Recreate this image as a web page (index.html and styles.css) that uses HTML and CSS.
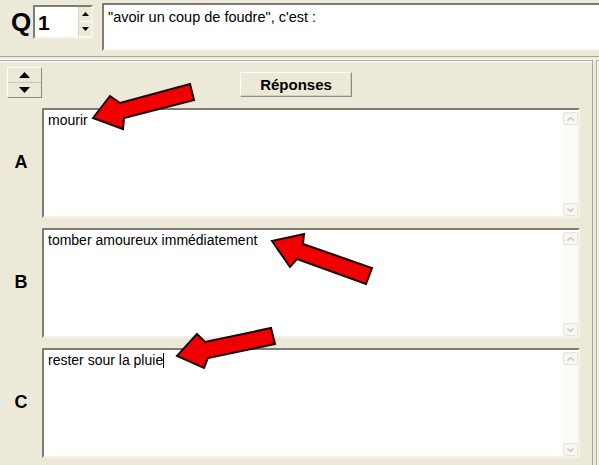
FILE: index.html
```html
<!DOCTYPE html>
<html lang="fr">
<head>
<meta charset="utf-8">
<title>Question</title>
<link rel="stylesheet" href="styles.css">
</head>
<body>
<div class="app">
  <div class="top">
    <div class="qlabel">Q</div>
    <div class="num">
      <div class="numfield">1</div>
      <div class="spinner">
        <div class="sbtn"><svg width="7" height="4" viewBox="0 0 7 4"><polygon points="3.5,0 7,4 0,4" fill="#000"/></svg></div>
        <div class="sbtn"><svg width="7" height="4" viewBox="0 0 7 4"><polygon points="0,0 7,0 3.5,4" fill="#000"/></svg></div>
      </div>
    </div>
    <div class="question">"avoir un coup de foudre", c'est :</div>
  </div>
  <div class="sep"></div>
  <div class="main">
    <div class="panel">
      <div class="head">
        <div class="updown">
          <div class="ud"><svg width="11" height="6" viewBox="0 0 11 6"><polygon points="5.5,0 11,6 0,6" fill="#000"/></svg></div>
          <div class="ud ud-low"><svg width="11" height="6" viewBox="0 0 11 6"><polygon points="0,0 11,0 5.5,6" fill="#000"/></svg></div>
        </div>
        <div class="repbtn">Réponses</div>
        <div></div>
      </div>
      <div class="row">
        <div class="letter">A</div>
        <div class="tbox">
          <div class="txt">mourir</div>
          <div class="vscroll">
            <div class="sarr"><svg width="7" height="4" viewBox="0 0 7 4"><polyline points="0.5,3.5 3.5,0.5 6.5,3.5" fill="none" stroke="#c4c2b6" stroke-width="1.2"/></svg></div>
            <div class="sarr"><svg width="7" height="4" viewBox="0 0 7 4"><polyline points="0.5,0.5 3.5,3.5 6.5,0.5" fill="none" stroke="#c4c2b6" stroke-width="1.2"/></svg></div>
          </div>
        </div>
      </div>
      <div class="row">
        <div class="letter">B</div>
        <div class="tbox">
          <div class="txt">tomber amoureux immédiatement</div>
          <div class="vscroll">
            <div class="sarr"><svg width="7" height="4" viewBox="0 0 7 4"><polyline points="0.5,3.5 3.5,0.5 6.5,3.5" fill="none" stroke="#c4c2b6" stroke-width="1.2"/></svg></div>
            <div class="sarr"><svg width="7" height="4" viewBox="0 0 7 4"><polyline points="0.5,0.5 3.5,3.5 6.5,0.5" fill="none" stroke="#c4c2b6" stroke-width="1.2"/></svg></div>
          </div>
        </div>
      </div>
      <div class="row">
        <div class="letter">C</div>
        <div class="tbox">
          <div class="txt">rester sour la pluie<span class="caret"></span></div>
          <div class="vscroll">
            <div class="sarr"><svg width="7" height="4" viewBox="0 0 7 4"><polyline points="0.5,3.5 3.5,0.5 6.5,3.5" fill="none" stroke="#c4c2b6" stroke-width="1.2"/></svg></div>
            <div class="sarr"><svg width="7" height="4" viewBox="0 0 7 4"><polyline points="0.5,0.5 3.5,3.5 6.5,0.5" fill="none" stroke="#c4c2b6" stroke-width="1.2"/></svg></div>
          </div>
        </div>
      </div>
    </div>
    <div class="edge"></div>
  </div>
  <svg class="arrows" width="599" height="465" viewBox="0 0 599 465">
    <g fill="#f00000" stroke="#1a0000" stroke-width="2" stroke-linejoin="miter">
      <polygon points="93,118 110,96 120,103 190,84 194,100 124,118 123,129"/>
      <polygon points="272,241 304,234 303,244 372,268 366,284 297,259 290,267"/>
      <polygon points="177,356 197,334 205,342 271,328 275,344 208,358 204,368"/>
    </g>
  </svg>
</div>
</body>
</html>
```

FILE: styles.css
```css
body {
  margin: 0;
  background: #ece9d8;
  font-family: "Liberation Sans", Arial, sans-serif;
  color: #000;
}

.app {
  position: relative;
  width: 599px;
  height: 465px;
  overflow: hidden;
}

.top {
  display: flex;
  align-items: flex-start;
  height: 56px;
  padding-top: 3px;
  box-sizing: border-box;
}

.qlabel {
  width: 33px;
  padding-left: 11px;
  box-sizing: border-box;
  font-weight: bold;
  font-size: 26px;
  line-height: 28px;
  margin-top: 5px;
}

.num {
  display: flex;
  margin-top: 2px;
  width: 60px;
  height: 34px;
  box-sizing: border-box;
  border: 2px solid;
  border-color: #7f7d72 #f4f2e8 #f4f2e8 #7f7d72;
  background: #fff;
}

.numfield {
  flex: 1;
  font-weight: bold;
  font-size: 21px;
  line-height: 24px;
  padding: 4px 0 0 3px;
}

.spinner {
  width: 12px;
  display: flex;
  flex-direction: column;
  background: #ece9d8;
  border-left: 1px solid #d6d3c4;
}

.sbtn {
  flex: 1;
  display: flex;
  align-items: center;
  justify-content: center;
  border-bottom: 1px solid #fff;
}

.question {
  margin-left: 9px;
  flex: 1;
  height: 48px;
  box-sizing: border-box;
  background: #fff;
  border-top: 2px solid #7f7d72;
  border-left: 2px solid #7f7d72;
  border-bottom: 2px solid #f4f2e8;
  padding: 4px 4px;
  font-size: 14.5px;
  line-height: 16px;
}

.sep {
  height: 2px;
  border-top: 1px solid #aca899;
  border-bottom: 1px solid #fff;
}

.main {
  display: flex;
  height: 405px;
}

.panel {
  width: 592px;
  border-top: 1px solid #aca899;
  border-right: 1px solid #aca899;
  box-shadow: inset 0 1px #fff;
}

.edge {
  flex: 1;
  margin-left: 3px;
  border-left: 1px solid #aca899;
  border-top: 1px solid #aca899;
  box-shadow: inset 1px 1px #fff;
}

.head {
  display: grid;
  grid-template-columns: 1fr auto 1fr;
  align-items: start;
  height: 47px;
}

.updown {
  margin: 6px 0 0 7px;
  width: 35px;
  height: 31px;
  box-sizing: border-box;
  border: 1px solid;
  border-color: #fff #8f8c7f #8f8c7f #fff;
  display: flex;
  flex-direction: column;
}

.ud {
  flex: 1;
  display: flex;
  align-items: center;
  justify-content: center;
}

.ud-low {
  border-top: 1px solid #c9c6b6;
}

.repbtn {
  margin-top: 11px;
  width: 112px;
  height: 25px;
  box-sizing: border-box;
  border: 1px solid;
  border-color: #fff #8f8c7f #8f8c7f #fff;
  box-shadow: inset -1px -1px #d4d0c0;
  font-weight: bold;
  font-size: 15px;
  line-height: 23px;
  text-align: center;
}

.row {
  display: flex;
  height: 110px;
  margin-bottom: 10px;
}

.letter {
  width: 42px;
  display: flex;
  align-items: center;
  justify-content: center;
  font-weight: bold;
  font-size: 18px;
  padding-bottom: 2px;
  box-sizing: border-box;
}

.tbox {
  width: 538px;
  box-sizing: border-box;
  border: 2px solid;
  border-color: #7f7d72 #f4f2e8 #f4f2e8 #7f7d72;
  background: #fff;
  display: flex;
}

.txt {
  flex: 1;
  padding: 2px 4px;
  font-size: 14px;
  line-height: 16px;
}

.caret {
  display: inline-block;
  width: 0;
  height: 15px;
  border-left: 1px solid #000;
  vertical-align: -3px;
}

.vscroll {
  width: 15px;
  display: flex;
  flex-direction: column;
  justify-content: space-between;
  background: #fbfbf8;
  margin-top: 2px;
}

.sarr {
  height: 13px;
  box-sizing: border-box;
  border: 1px solid #e6e4da;
  border-radius: 2px;
  background: #f7f6f1;
  display: flex;
  align-items: center;
  justify-content: center;
}

.arrows {
  position: absolute;
  left: 0;
  top: 0;
  pointer-events: none;
}
```
